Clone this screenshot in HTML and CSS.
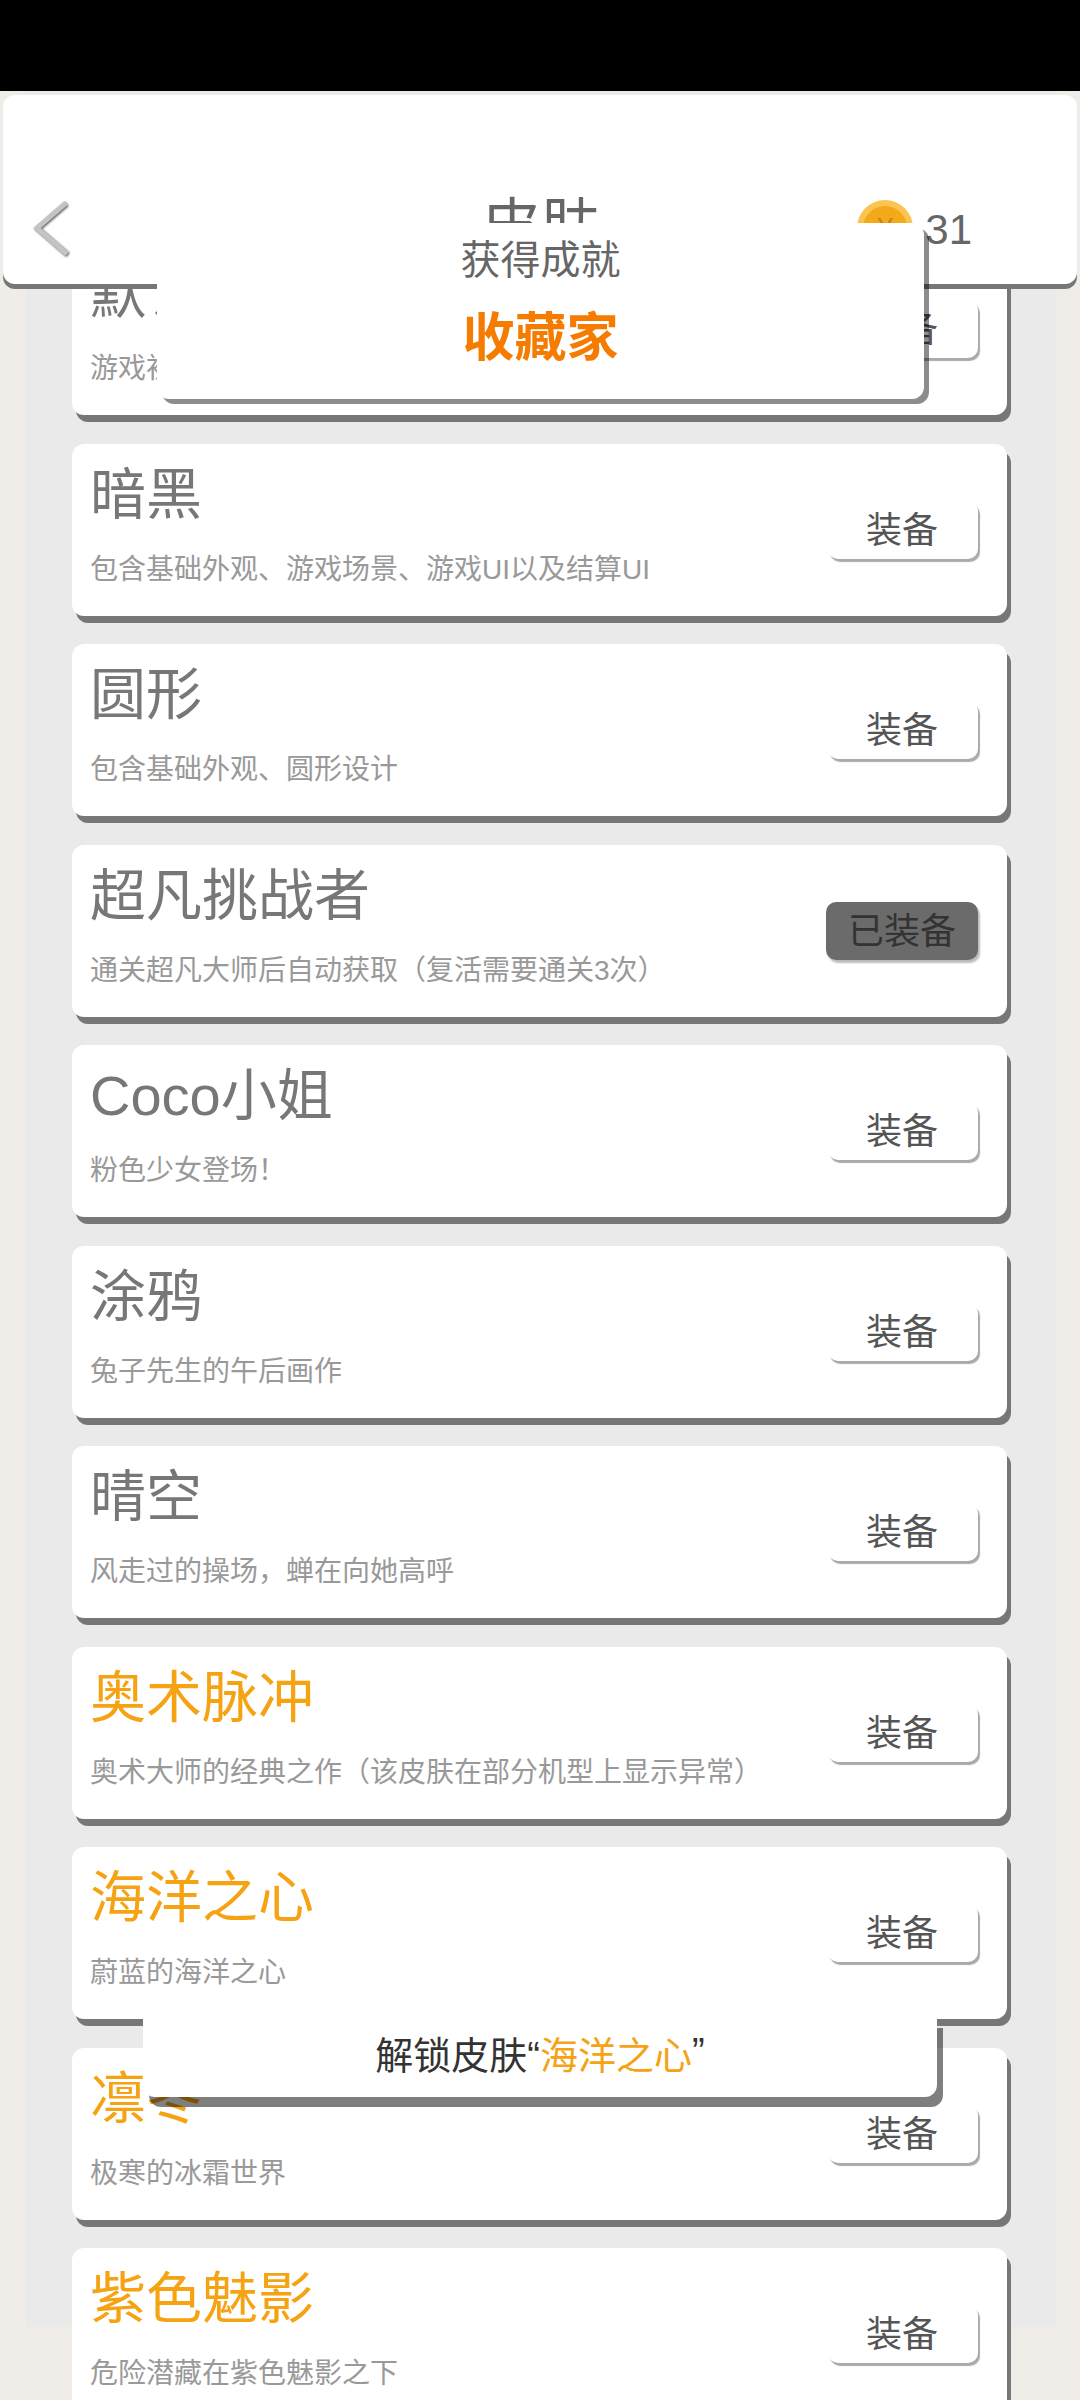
FILE: index.html
```html
<!DOCTYPE html>
<html lang="zh">
<head>
<meta charset="utf-8">
<title>皮肤</title>
<link rel="stylesheet" href="styles.css">
</head>
<body>
<div class="status"></div>
<main class="panel">
  <section class="card"><div class="info"><h2 class="name">默认皮肤</h2><p class="desc">游戏初始皮肤</p></div><button class="equip">装备</button></section>
  <section class="card"><div class="info"><h2 class="name">暗黑</h2><p class="desc">包含基础外观、游戏场景、游戏UI以及结算UI</p></div><button class="equip">装备</button></section>
  <section class="card"><div class="info"><h2 class="name">圆形</h2><p class="desc">包含基础外观、圆形设计</p></div><button class="equip">装备</button></section>
  <section class="card"><div class="info"><h2 class="name">超凡挑战者</h2><p class="desc">通关超凡大师后自动获取&#xFF08;复活需要通关3次&#xFF09;</p></div><button class="equip active">已装备</button></section>
  <section class="card"><div class="info"><h2 class="name">Coco小姐</h2><p class="desc">粉色少女登场&#xFF01;</p></div><button class="equip">装备</button></section>
  <section class="card"><div class="info"><h2 class="name">涂鸦</h2><p class="desc">兔子先生的午后画作</p></div><button class="equip">装备</button></section>
  <section class="card"><div class="info"><h2 class="name">晴空</h2><p class="desc">风走过的操场&#xFF0C;蝉在向她高呼</p></div><button class="equip">装备</button></section>
  <section class="card"><div class="info"><h2 class="name gold">奥术脉冲</h2><p class="desc">奥术大师的经典之作&#xFF08;该皮肤在部分机型上显示异常&#xFF09;</p></div><button class="equip">装备</button></section>
  <section class="card"><div class="info"><h2 class="name gold">海洋之心</h2><p class="desc">蔚蓝的海洋之心</p></div><button class="equip">装备</button></section>
  <section class="card"><div class="info"><h2 class="name gold">凛冬</h2><p class="desc">极寒的冰霜世界</p></div><button class="equip">装备</button></section>
  <section class="card"><div class="info"><h2 class="name gold">紫色魅影</h2><p class="desc">危险潜藏在紫色魅影之下</p></div><button class="equip">装备</button></section>
</main>
<header class="topbar">
  <svg class="back" width="44" height="64" viewBox="0 0 44 64" aria-hidden="true"><polyline points="36,7 7,32 37,58" fill="none" stroke="#c4c4c4" stroke-width="5"/></svg>
  <h1 class="title">皮肤</h1>
  <div class="wallet"><span class="coin"><span class="coin-core">¥</span></span><span class="amount">31</span></div>
</header>
<aside class="achievement">
  <div class="ach-label">获得成就</div>
  <div class="ach-name">收藏家</div>
</aside>
<aside class="unlock">解锁皮肤“<span class="unlock-name">海洋之心</span>”</aside>
</body>
</html>
```
FILE: styles.css
```css
* { box-sizing: border-box; }
html, body { margin: 0; padding: 0; }
body {
  position: relative;
  width: 1080px;
  height: 2400px;
  overflow: hidden;
  background: #f0ede9;
  font-family: "Liberation Sans", "Noto Sans CJK SC", sans-serif;
}
.status { height: 91px; background: #000; }
.panel {
  display: flex;
  flex-direction: column;
  gap: 28.5px;
  height: 2236px;
  margin: 0 24px 0 25px;
  padding: 152px 49px 0 47px;
  background: #eaeaea;
}
.card {
  flex: none;
  display: flex;
  align-items: center;
  justify-content: space-between;
  height: 172px;
  padding: 0 29px 0 18px;
  background: #fff;
  border-radius: 12px;
  box-shadow: 4px 7px 0 #777;
}
.info { align-self: flex-start; padding-top: 15px; }
.name {
  margin: 0;
  font-size: 56px;
  font-weight: 400;
  line-height: 72px;
  color: #777;
}
.name.gold { color: #f6a313; }
.desc {
  margin: 19px 0 0;
  font-size: 28px;
  line-height: 40px;
  color: #999;
}
.equip {
  height: 58px;
  padding: 0 40px 0 38px;
  border: 0;
  border-radius: 10px;
  background: #fff;
  box-shadow: 2px 3px 1px #aaa;
  font: inherit;
  font-size: 36px;
  line-height: 60px;
  color: #555;
}
.equip.active {
  padding: 0 22px;
  background: #6b6b6b;
  color: #333;
  box-shadow: 2px 3px 2px #bbb;
}
.topbar {
  position: absolute;
  top: 95px;
  left: 3px;
  width: 1074px;
  height: 189px;
  display: grid;
  grid-template-columns: 1fr auto 1fr;
  align-items: center;
  padding: 77px 0 0 27px;
  background: #fff;
  border-radius: 12px;
  box-shadow: 0 5px 0 #777;
}
.back { filter: drop-shadow(1px 1px 1px #555); }
.title {
  margin: 0;
  font-size: 60px;
  font-weight: 400;
  line-height: 72px;
  color: #666;
  transform: translateX(-13px);
}
.wallet {
  display: flex;
  justify-content: flex-end;
  align-items: center;
  gap: 12px;
  padding-right: 105px;
}
.coin {
  display: flex;
  align-items: center;
  justify-content: center;
  width: 56px;
  height: 56px;
  border-radius: 50%;
  background: #fbc34f;
}
.coin-core {
  width: 44px;
  height: 44px;
  border-radius: 50%;
  background: #f4a91b;
  text-align: center;
  font-size: 28px;
  line-height: 44px;
  color: #c98312;
}
.amount { padding-top: 4px; font-size: 42px; line-height: 56px; color: #666; }
.achievement {
  position: absolute;
  top: 223px;
  left: 157px;
  width: 767px;
  height: 176px;
  padding-top: 10px;
  text-align: center;
  background: #fff;
  border-radius: 12px;
  box-shadow: 5px 5px 0 rgba(0, 0, 0, .45);
}
.ach-label { font-size: 40px; line-height: 54px; color: #666; }
.ach-name {
  margin-top: 15px;
  font-size: 52px;
  font-weight: 700;
  line-height: 72px;
  color: #f57c00;
}
.unlock {
  position: absolute;
  top: 2018px;
  left: 143px;
  width: 794px;
  height: 79px;
  padding-bottom: 10px;
  display: flex;
  align-items: center;
  justify-content: center;
  font-size: 38px;
  color: #333;
  background: #fff;
  border-radius: 0 0 12px 12px;
  box-shadow: 6px 10px 0 rgba(0, 0, 0, .5);
}
.unlock-name { color: #f6a313; }
```
